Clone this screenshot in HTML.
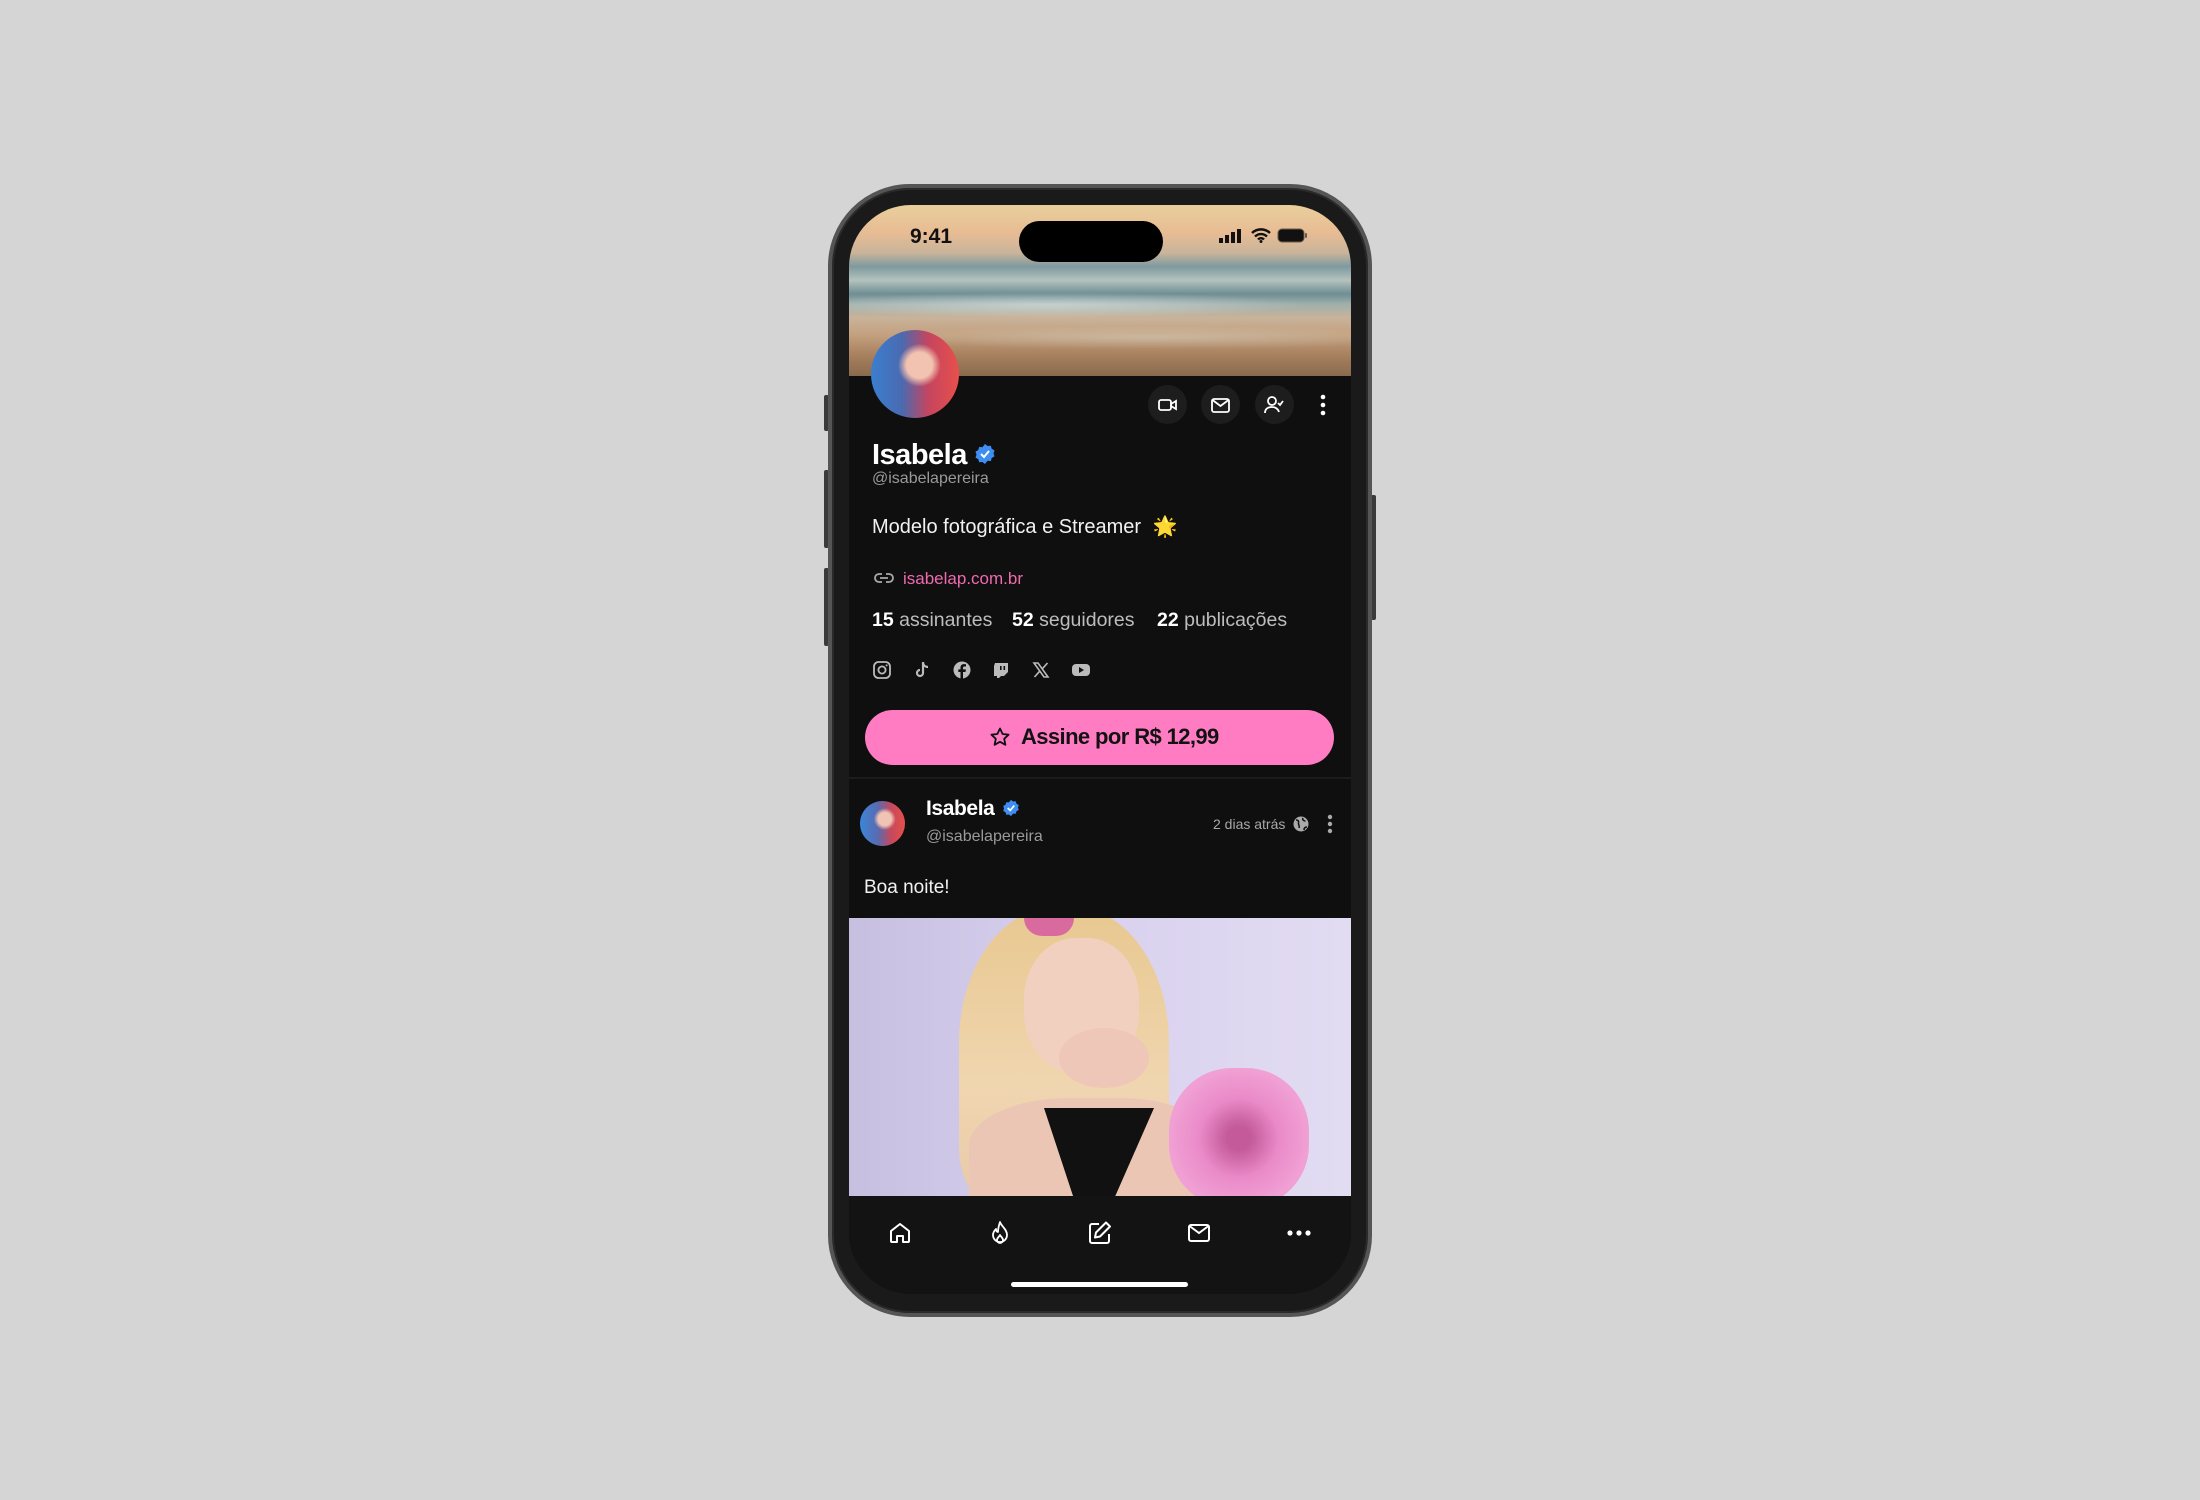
<!DOCTYPE html>
<html><head><meta charset="utf-8">
<style>
*{margin:0;padding:0;box-sizing:border-box}
body{width:2200px;height:1500px;background:#d5d5d5;position:relative;overflow:hidden;font-family:"Liberation Sans",sans-serif}
.abs{position:absolute}
.phone{left:828px;top:184px;width:544px;height:1133px;border-radius:82px;background:#1a1a1a;border:4px solid #555;box-shadow:inset 0 0 0 2px #2a2a2a}
.screen{left:849px;top:205px;width:502px;height:1089px;border-radius:62px;background:#0f0f10;overflow:hidden}
.cover{left:0;top:0;width:502px;height:171px;background:
 linear-gradient(180deg,#e9cf9c 0%,#e8bc94 16%,#c9b49a 28%,#7f9aa0 36%,#b4c2bd 44%,#6f8e94 52%,#9fb0ac 58%,#c9b39a 66%,#c3a07e 76%,#a7805e 88%,#8a6a4e 100%)}
.txt{position:absolute;white-space:nowrap}
.btn{position:absolute;width:39px;height:39px;border-radius:50%;background:#1d1d1e}
svg{position:absolute}
</style></head><body>
<div class="abs" style="left:824px;top:395px;width:5px;height:36px;background:#3a3a3a;border-radius:2px"></div>
<div class="abs" style="left:824px;top:470px;width:5px;height:78px;background:#3a3a3a;border-radius:2px"></div>
<div class="abs" style="left:824px;top:568px;width:5px;height:78px;background:#3a3a3a;border-radius:2px"></div>
<div class="abs" style="left:1371px;top:495px;width:5px;height:125px;background:#3a3a3a;border-radius:2px"></div>
<div class="abs phone"></div>
<div class="abs screen">
 <div class="abs cover"></div>
 <div class="abs" style="left:0;top:85px;width:502px;height:30px;background:radial-gradient(ellipse at 40% 50%,rgba(230,240,240,.5),transparent 60%)"></div>
 <div class="abs" style="left:0;top:120px;width:502px;height:25px;background:radial-gradient(ellipse at 60% 50%,rgba(220,230,225,.35),transparent 65%)"></div>
 <div class="txt" style="left:61px;top:20px;font-size:21px;font-weight:bold;color:#111">9:41</div>
 <div class="abs" style="left:170px;top:16px;width:144px;height:41px;border-radius:21px;background:#000"></div>
 <svg style="left:370px;top:24px" width="26" height="14"><rect x="0" y="9" width="4" height="5" fill="#111"/><rect x="6" y="6" width="4" height="8" fill="#111"/><rect x="12" y="3" width="4" height="11" fill="#111"/><rect x="18" y="0" width="4" height="14" fill="#111"/></svg>
 <svg style="left:402px;top:23px" width="20" height="15" viewBox="0 0 20 15"><path d="M1 5a13 13 0 0 1 18 0M4 8.5a8.5 8.5 0 0 1 12 0M7 11.5a4 4 0 0 1 6 0" stroke="#111" stroke-width="2.4" fill="none"/><circle cx="10" cy="13.5" r="1.5" fill="#111"/></svg>
 <svg style="left:428px;top:23px" width="32" height="15"><rect x="1" y="1" width="26" height="13" rx="4" fill="#111" stroke="#6b5a48" stroke-width="1"/><rect x="28" y="5" width="2" height="5" rx="1" fill="#6b5a48"/></svg>
 <div class="abs" style="left:22px;top:125px;width:88px;height:88px;border-radius:50%;background:radial-gradient(circle at 55% 40%,#f2c3b0 0 18%,transparent 30%),linear-gradient(90deg,#3a7fd0 0%,#4a6ab0 35%,#c44560 65%,#e8504a 100%)"></div>
 <div class="btn" style="left:299px;top:180px"></div>
 <div class="btn" style="left:352px;top:180px"></div>
 <div class="btn" style="left:406px;top:180px"></div>
 <svg style="left:307px;top:190px" width="24" height="20" viewBox="0 0 24 20"><rect x="3" y="5" width="12" height="10" rx="2" stroke="#fff" stroke-width="1.8" fill="none"/><path d="M15 9l5-3v8l-5-3z" stroke="#fff" stroke-width="1.8" fill="none"/></svg>
 <svg style="left:361px;top:190px" width="22" height="20" viewBox="0 0 22 20"><rect x="2" y="4" width="17" height="13" rx="2" stroke="#fff" stroke-width="1.8" fill="none"/><path d="M2.5 5l8 6 8-6" stroke="#fff" stroke-width="1.8" fill="none"/></svg>
 <svg style="left:414px;top:189px" width="24" height="22" viewBox="0 0 24 22"><circle cx="9" cy="7" r="4" stroke="#fff" stroke-width="1.8" fill="none"/><path d="M2 19c0-4 3-6 7-6s6 2 7 5M15 9l2 2 3-4" stroke="#fff" stroke-width="1.8" fill="none"/></svg>
 <svg style="left:470px;top:188px" width="8" height="24"><circle cx="4" cy="4" r="2.3" fill="#fff"/><circle cx="4" cy="12" r="2.3" fill="#fff"/><circle cx="4" cy="20" r="2.3" fill="#fff"/></svg>
 <div class="txt" style="left:23px;top:234px;font-size:29px;font-weight:bold;color:#fff;letter-spacing:-0.5px">Isabela</div>
 <svg style="left:125px;top:238px" width="22" height="22" viewBox="0 0 22 22"><path d="M11 1l2.6 2 3.2-.3.9 3.1 2.8 1.6-1 3 1 3-2.8 1.6-.9 3.1-3.2-.3L11 21l-2.6-2-3.2.3-.9-3.1-2.8-1.6 1-3-1-3 2.8-1.6.9-3.1 3.2.3z" fill="#3d8ef0"/><path d="M7 11l3 3 5-6" stroke="#fff" stroke-width="2" fill="none"/></svg>
 <div class="txt" style="left:23px;top:265px;font-size:16px;color:#9a9a9a">@isabelapereira</div>
 <div class="txt" style="left:23px;top:309px;font-size:20px;color:#f2f2f2">Modelo fotográfica e Streamer <span style="margin-left:6px;color:#f5c542">🌟</span></div>
 <svg style="left:25px;top:364px" width="20" height="18" viewBox="0 0 20 18"><path d="M8 5H5a4 4 0 0 0 0 8h3M12 5h3a4 4 0 0 1 0 8h-3M6 9h8" stroke="#aaa" stroke-width="1.8" fill="none"/></svg>
 <div class="txt" style="left:54px;top:364px;font-size:17px;color:#f06aae">isabelap.com.br</div>
 <div class="txt" style="left:23px;top:404px;font-size:19.5px;color:#bdbdbd"><b style="color:#fff">15</b> assinantes</div>
 <div class="txt" style="left:163px;top:404px;font-size:19.5px;color:#bdbdbd"><b style="color:#fff">52</b> seguidores</div>
 <div class="txt" style="left:308px;top:404px;font-size:19.5px;color:#bdbdbd"><b style="color:#fff">22</b> publicações</div>
 <svg style="left:23px;top:455px" width="20" height="20" viewBox="0 0 20 20"><rect x="2" y="2" width="16" height="16" rx="4.5" stroke="#bbb" stroke-width="1.8" fill="none"/><circle cx="10" cy="10" r="3.6" stroke="#bbb" stroke-width="1.8" fill="none"/><circle cx="14.6" cy="5.4" r="1" fill="#bbb"/></svg>
 <svg style="left:63px;top:455px" width="20" height="20" viewBox="0 0 20 20"><path d="M11 2v11a3 3 0 1 1-3-3M11 2c0 3 2 5 5 5" stroke="#bbb" stroke-width="2.2" fill="none"/></svg>
 <svg style="left:103px;top:455px" width="20" height="20" viewBox="0 0 20 20"><circle cx="10" cy="10" r="8.5" fill="#bbb"/><path d="M11 19v-7h2.5l.4-2.6H11V7.8c0-.8.3-1.3 1.4-1.3H14V4.2c-.4 0-1.2-.1-2.1-.1-2 0-3.4 1.2-3.4 3.5v1.8H6.3V12h2.2v7z" fill="#0f0f10"/></svg>
 <svg style="left:143px;top:456px" width="18" height="18" viewBox="0 0 18 18"><path d="M3 2h13v9l-4 4H9l-2 2H5v-2H2V5z" fill="#bbb"/><rect x="8" y="5" width="1.6" height="4" fill="#0f0f10"/><rect x="11.5" y="5" width="1.6" height="4" fill="#0f0f10"/></svg>
 <svg style="left:183px;top:456px" width="18" height="18" viewBox="0 0 18 18"><path d="M2 2h4l10 14h-4zM15.5 2L10.3 7.8M2.5 16l5.2-5.8" stroke="#bbb" stroke-width="1.6" fill="none"/></svg>
 <svg style="left:222px;top:457px" width="20" height="16" viewBox="0 0 20 16"><rect x="1" y="2" width="18" height="12" rx="4" fill="#bbb"/><path d="M8 5v6l5-3z" fill="#0f0f10"/></svg>
 <div class="abs" style="left:16px;top:505px;width:469px;height:55px;border-radius:28px;background:#ff7cc3"></div>
 <svg style="left:140px;top:521px" width="22" height="22" viewBox="0 0 22 22"><path d="M11 2.5l2.6 5.5 6 .7-4.4 4.1 1.2 6-5.4-3-5.4 3 1.2-6-4.4-4.1 6-.7z" stroke="#111" stroke-width="1.8" fill="none" stroke-linejoin="round"/></svg>
 <div class="txt" style="left:172px;top:519px;font-size:22px;font-weight:bold;color:#121212;letter-spacing:-0.6px">Assine por R$ 12,99</div>
 <div class="abs" style="left:0;top:572px;width:502px;height:2px;background:#1c1c1d"></div>
 <div class="abs" style="left:11px;top:596px;width:45px;height:45px;border-radius:50%;background:radial-gradient(circle at 55% 40%,#f0c4b4 0 18%,transparent 30%),linear-gradient(90deg,#3a86d8 0%,#5a6ab0 40%,#c8485c 70%,#e45048 100%)"></div>
 <div class="txt" style="left:77px;top:592px;font-size:21px;font-weight:bold;color:#fff;letter-spacing:-0.4px">Isabela</div>
 <svg style="left:153px;top:594px" width="18" height="18" viewBox="0 0 22 22"><path d="M11 1l2.6 2 3.2-.3.9 3.1 2.8 1.6-1 3 1 3-2.8 1.6-.9 3.1-3.2-.3L11 21l-2.6-2-3.2.3-.9-3.1-2.8-1.6 1-3-1-3 2.8-1.6.9-3.1 3.2.3z" fill="#3d8ef0"/><path d="M7 11l3 3 5-6" stroke="#fff" stroke-width="2" fill="none"/></svg>
 <div class="txt" style="left:77px;top:623px;font-size:16px;color:#9a9a9a">@isabelapereira</div>
 <div class="txt" style="left:364px;top:611px;font-size:14px;color:#a8a8a8">2 dias atrás</div>
 <svg style="left:443px;top:610px" width="18" height="18" viewBox="0 0 18 18"><circle cx="9" cy="9" r="7.5" fill="#aaa"/><path d="M4 5c2 0 3 1 2.5 3S8 10 7 13M11 3c-1 2 1 3 2.5 3M12 15c0-2 1-3 3-3" stroke="#0f0f10" stroke-width="1.5" fill="none"/></svg>
 <svg style="left:477px;top:608px" width="8" height="22"><circle cx="4" cy="4" r="2.2" fill="#aaa"/><circle cx="4" cy="11" r="2.2" fill="#aaa"/><circle cx="4" cy="18" r="2.2" fill="#aaa"/></svg>
 <div class="txt" style="left:15px;top:672px;font-size:19px;color:#f2f2f2">Boa noite!</div>
 <div class="abs" style="left:0;top:713px;width:502px;height:278px;background:linear-gradient(90deg,#c7bfe0 0%,#d8d0ee 45%,#e2dcf2 100%);overflow:hidden">
  <div class="abs" style="left:110px;top:-10px;width:210px;height:300px;border-radius:45% 45% 20% 20%;background:linear-gradient(180deg,#e8c890,#f0d6b0 60%,#e8c8a8)"></div>
  <div class="abs" style="left:175px;top:20px;width:115px;height:135px;border-radius:45%;background:#f2d0c0"></div>
  <div class="abs" style="left:210px;top:110px;width:90px;height:60px;border-radius:50%;background:#efc7b8"></div>
  <div class="abs" style="left:120px;top:180px;width:250px;height:120px;border-radius:40% 40% 0 0;background:#ecc6b4"></div>
  <div class="abs" style="left:195px;top:190px;width:110px;height:100px;background:#111;clip-path:polygon(0 0,100% 0,60% 100%,30% 100%)"></div>
  <div class="abs" style="left:320px;top:150px;width:140px;height:140px;border-radius:45%;background:radial-gradient(circle,#c45a9a 0 12%,#ea8ac8 40%,#f0a0d4 70%)"></div>
  <div class="abs" style="left:175px;top:0;width:50px;height:18px;border-radius:0 0 20px 20px;background:#d86aa0"></div>
 </div>
 <div class="abs" style="left:0;top:991px;width:502px;height:100px;background:#131314"></div>
 <svg style="left:39px;top:1016px" width="24" height="24" viewBox="0 0 24 24"><path d="M3 10l9-7 9 7v10a1 1 0 0 1-1 1h-5v-6h-6v6H4a1 1 0 0 1-1-1z" stroke="#fff" stroke-width="2" fill="none" stroke-linejoin="round"/></svg>
 <svg style="left:139px;top:1015px" width="24" height="26" viewBox="0 0 24 26"><path d="M12 2c1 4 7 7 7 13a7 7 0 0 1-14 0c0-3 2-5 3-6 0 2 1 3 2 3 0-4 1-7 2-10zM12 23a3 3 0 0 1-3-3c0-2 2-3 3-5 1 2 3 3 3 5a3 3 0 0 1-3 3z" stroke="#fff" stroke-width="1.8" fill="none" stroke-linejoin="round"/></svg>
 <svg style="left:238px;top:1015px" width="26" height="26" viewBox="0 0 26 26"><path d="M12 4H5a2 2 0 0 0-2 2v15a2 2 0 0 0 2 2h15a2 2 0 0 0 2-2v-7" stroke="#fff" stroke-width="2" fill="none"/><path d="M19 2.5l4 4-10 10-5 1 1-5z" stroke="#fff" stroke-width="2" fill="none" stroke-linejoin="round"/></svg>
 <svg style="left:338px;top:1018px" width="24" height="20" viewBox="0 0 24 20"><rect x="2" y="2" width="20" height="16" rx="2" stroke="#fff" stroke-width="2" fill="none"/><path d="M2.5 3l9.5 7 9.5-7" stroke="#fff" stroke-width="2" fill="none"/></svg>
 <svg style="left:437px;top:1024px" width="26" height="8"><circle cx="4" cy="4" r="2.6" fill="#fff"/><circle cx="13" cy="4" r="2.6" fill="#fff"/><circle cx="22" cy="4" r="2.6" fill="#fff"/></svg>
 <div class="abs" style="left:162px;top:1077px;width:177px;height:5px;border-radius:3px;background:#fff"></div>
</div>
</body></html>
